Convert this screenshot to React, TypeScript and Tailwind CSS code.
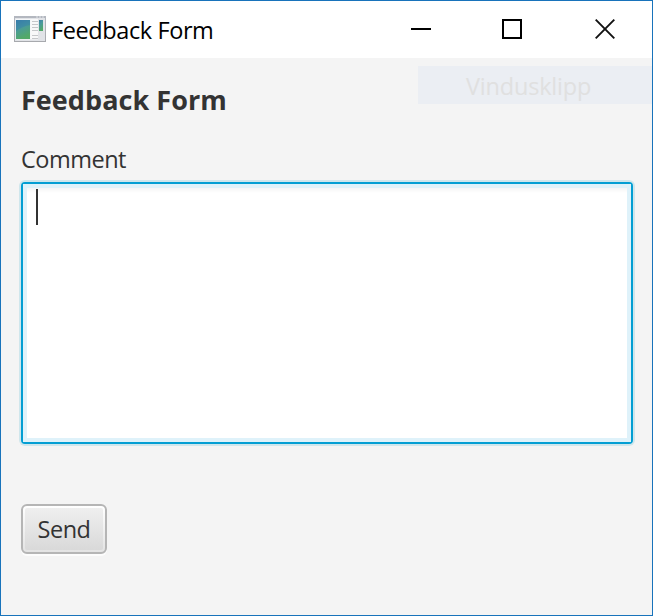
function AppIcon() {
  return (
    <svg width="32" height="26" viewBox="0 0 32 26" className="block shrink-0">
      <defs>
        <linearGradient id="pane" x1="0" y1="0" x2="0.35" y2="1">
          <stop offset="0" stopColor="#3d7fa8" />
          <stop offset="0.45" stopColor="#4a9a9c" />
          <stop offset="1" stopColor="#52a968" />
        </linearGradient>
        <linearGradient id="frame" x1="0" y1="0" x2="0" y2="1">
          <stop offset="0" stopColor="#b4b8c0" />
          <stop offset="1" stopColor="#a7a9ad" />
        </linearGradient>
      </defs>
      <rect width="32" height="26" fill="url(#frame)" />
      <rect x="1" y="2" width="30" height="23" fill="#e1e3e7" />
      <rect x="1.500" y="3" width="15.500" height="20.500" fill="#f4f6f8" />
      <rect x="2" y="4" width="14" height="19" fill="url(#pane)" />
      <path d="M2 4H16V9Q9 10 2 15Z" fill="#2f78b0" opacity=".4" />
      <rect x="17" y="3" width="7" height="20.500" fill="#f8f8f9" />
      <path d="M18 5.500h6M18 8.500h6M18 11.500h6M18 14.500h6M18 19.500h6M18 22.500h6" stroke="#c5c7ca" />
      <rect x="25" y="4" width="4" height="11" fill="url(#pane)" />
      <path d="M22 1h9" stroke="#dfe2e7" strokeDasharray="2 1" />
    </svg>
  );
}

export default function App() {
  return (
    <div className="flex h-[616px] w-[653px] flex-col overflow-hidden border border-[#1873bb] bg-[#f4f4f4] font-['Open_Sans','Noto_Sans',sans-serif] text-[#333333]">
      <header className="flex h-[57px] shrink-0 items-start bg-white text-black">
        <div className="ml-[13px] mt-[15px]"><AppIcon /></div>
        <span className="ml-[5px] mt-[13px] w-[340px] whitespace-nowrap text-[23.500px] leading-8 tracking-[-0.4px]">Feedback Form</span>
        <div className="ml-[20px] mt-[18px] flex items-start">
          <svg width="20" height="20" className="block"><path d="M0 10h20" stroke="#000" strokeWidth="2" /></svg>
          <svg width="20" height="20" className="ml-[71px] block"><rect x="1" y="1" width="18" height="18" fill="none" stroke="#000" strokeWidth="2" /></svg>
          <svg width="20" height="20" className="ml-[73px] block"><path d="M.7.7 19.300 19.300M19.300.7.7 19.300" stroke="#111" strokeWidth="1.900" /></svg>
        </div>
      </header>
      <main className="flex flex-col items-start">
        <div className="flex h-[85px] w-full items-start justify-between pl-5">
          <h1 className="mt-[26px] whitespace-nowrap text-[27px] font-bold leading-8 tracking-[0.05px]">Feedback Form</h1>
          <div className="mt-2 h-[38px] w-[234px] bg-[#ebeef3] pl-[48px] pt-[4px] text-[23.500px] leading-8 tracking-[-0.2px] text-[#e0e0e0]">Vindusklipp</div>
        </div>
        <label className="ml-5 flex h-[39px] flex-col whitespace-nowrap text-[23.500px] leading-8 tracking-[-0.5px]">Comment</label>
        <div className="ml-5 h-[262px] w-[612px] rounded-[4px] border-2 border-[#039ed3] bg-white shadow-[0_0_0_2px_#cfe6ec]">
          <div className="h-full border-4 border-[#dff2fa] bg-[linear-gradient(#f5f5f5,#ffffff_5px)] pl-[9px] pt-px">
            <div className="h-9 w-[2px] bg-[#333333]" />
          </div>
        </div>
        <button className="ml-5 mt-[60px] h-[50px] w-[86px] rounded-[6px] border-2 border-[#b5b5b5] bg-[linear-gradient(#ffffff,#e3e3e3)] p-[2px] shadow-[0_2px_0_#fcfcfc]">
          <span className="flex h-full items-center justify-center rounded-[2px] bg-[linear-gradient(#efefef,#d9d9d9)] text-[23.500px] leading-8 tracking-[-0.5px]">Send</span>
        </button>
      </main>
    </div>
  );
}
